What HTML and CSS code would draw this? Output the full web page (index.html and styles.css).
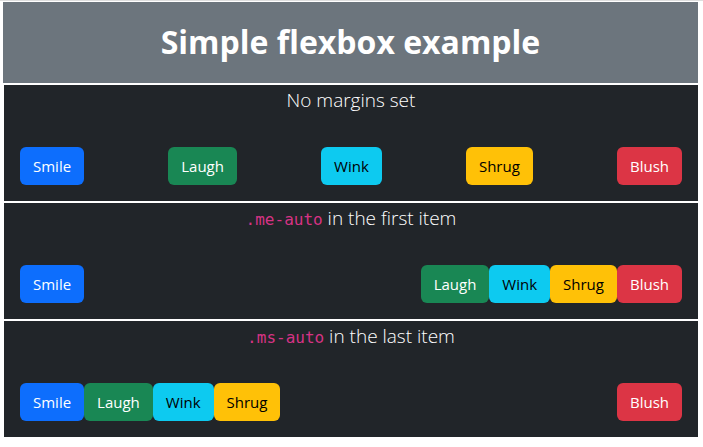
FILE: index.html
```html
<!DOCTYPE html>
<html lang="en">
<head>
<meta charset="utf-8">
<title>Simple flexbox example</title>
<link rel="stylesheet" href="styles.css">
</head>
<body>
<div class="page">
  <header class="hero">
    <h1 class="hero-title">Simple flexbox example</h1>
  </header>

  <section class="demo">
    <p class="demo-caption">No margins set</p>
    <div class="row row-between">
      <button class="btn btn-blue">Smile</button>
      <button class="btn btn-green">Laugh</button>
      <button class="btn btn-cyan">Wink</button>
      <button class="btn btn-yellow">Shrug</button>
      <button class="btn btn-red">Blush</button>
    </div>
  </section>

  <section class="demo">
    <p class="demo-caption"><code class="code">.me-auto</code> in the first item</p>
    <div class="row">
      <button class="btn btn-blue push-right">Smile</button>
      <button class="btn btn-green">Laugh</button>
      <button class="btn btn-cyan">Wink</button>
      <button class="btn btn-yellow">Shrug</button>
      <button class="btn btn-red">Blush</button>
    </div>
  </section>

  <section class="demo">
    <p class="demo-caption"><code class="code">.ms-auto</code> in the last item</p>
    <div class="row">
      <button class="btn btn-blue">Smile</button>
      <button class="btn btn-green">Laugh</button>
      <button class="btn btn-cyan">Wink</button>
      <button class="btn btn-yellow">Shrug</button>
      <button class="btn btn-red push-left">Blush</button>
    </div>
  </section>
</div>
</body>
</html>
```
FILE: styles.css
```css
html, body {
  margin: 0;
  padding: 0;
  background: #ffffff;
}

body {
  border-top: 1px solid #dedede;
  font-family: "Open Sans", "Noto Sans", sans-serif;
}

.page {
  display: flex;
  flex-direction: column;
  gap: 2px;
  margin: 1px 5px 0 3px;
}

.hero {
  background: #6c757d;
  height: 81px;
  display: flex;
  align-items: center;
  justify-content: center;
}

.hero-title {
  margin: 0;
  color: #ffffff;
  font-size: 32px;
  font-weight: 700;
  line-height: 1.2;
}

.demo {
  background: #212529;
  margin-left: 1px;
  display: flex;
  flex-direction: column;
  height: 116px;
  box-sizing: border-box;
}

.demo-caption {
  height: 30px;
  margin: 0 0 16px;
  color: #ffffff;
  text-align: center;
  font-size: 19px;
  font-weight: 300;
  line-height: 30px;
}

.code {
  color: #d63384;
  font-family: "DejaVu Sans Mono", "Liberation Mono", monospace;
  font-size: 16px;
  line-height: 1;
}

.row {
  display: flex;
  padding: 16px;
}

.row-between {
  justify-content: space-between;
}

.btn {
  box-sizing: border-box;
  height: 38px;
  padding: 0 12px;
  border: 1px solid transparent;
  border-radius: 6px;
  font-family: "Open Sans", "Noto Sans", sans-serif;
  font-size: 15px;
  line-height: 24px;
  color: #ffffff;
}

.btn-blue { background: #0d6efd; }
.btn-green { background: #198754; }
.btn-cyan { background: #0dcaf0; color: #000000; }
.btn-yellow { background: #ffc107; color: #000000; }
.btn-red { background: #dc3545; }

.push-right { margin-right: auto; }
.push-left { margin-left: auto; }
```
